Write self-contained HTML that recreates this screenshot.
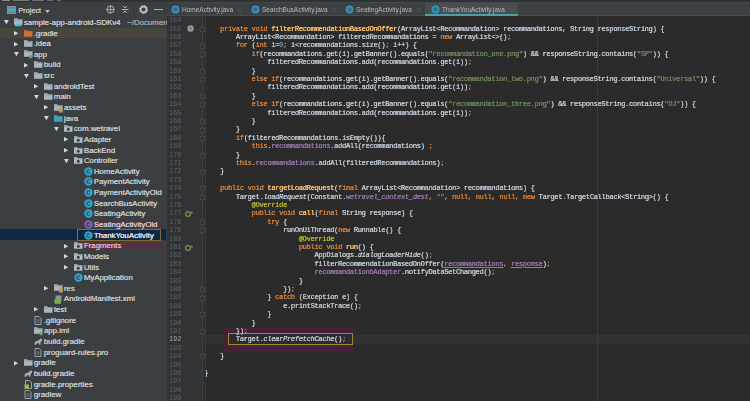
<!DOCTYPE html>
<html><head><meta charset="utf-8"><style>
*{margin:0;padding:0;box-sizing:border-box}
html,body{width:750px;height:401px;overflow:hidden;background:#3c3f41;position:relative}
body{font-family:"Liberation Sans",sans-serif}
div{position:absolute}
.topstrip{left:0;top:0;width:750px;height:1.6px;background:#2f3336}
.proj{left:0;top:0;width:167px;height:401px;background:#3c3f41;overflow:hidden}
.tabs{left:166px;top:1.6px;width:584px;height:14.7px;background:#3d4043}
.gut{left:167px;top:16px;width:37px;height:385px;background:#313335}
.ed{left:204px;top:16px;width:546px;height:385px;background:#2b2b2b;overflow:hidden}
.ln{left:160px;width:21.3px;height:8.4px;line-height:8.4px;font:6.8px/8.4px "Liberation Mono",monospace;color:#606366;text-align:right}
.ln.cur{color:#a4a3a3}
.cl{left:204.3px;white-space:pre;height:8.4px;font:7.0px/8.4px "Liberation Mono",monospace;letter-spacing:-0.270px;color:#bfc9d3;text-shadow:0.3px 0 0 currentColor}
.k{color:#d8823a} .s{color:#6a8759} .m{color:#ffc66d} .n{color:#6897bb} .f{color:#9876aa} .a{color:#bbb529} .i{font-style:italic} .fi{color:#9876aa;font-style:italic} .fu{color:#9876aa;text-decoration:underline;text-decoration-thickness:0.6px;text-underline-offset:0.8px}
.tr{white-space:pre;height:10.637px;line-height:10.637px;font-size:7.85px;color:#cacaca;text-shadow:0.25px 0 0 #cacaca}
.path{color:#8c8c8c}
.tri,.ic{line-height:0}
.tab{top:2.9px;height:14px;line-height:14px;font-size:6.5px;color:#bbbbbb;white-space:pre}
.margin{left:597px;top:16px;width:1px;height:385px;background:#3b3b3b}
</style></head><body><div id="wrap" style="position:absolute;left:0;top:0;width:750px;height:401px;filter:blur(0.35px)">
<div class="proj">
<div style="left:0;top:27.82px;width:166px;height:10.637px;background:#47463c"></div>
<div style="left:0;top:229.2px;width:166px;height:11px;background:#0f2740"></div>

<div style="left:7px;top:6px;line-height:0"><svg width="9" height="8"><rect x="0.4" y="0.4" width="8.2" height="7.2" fill="#6e8196" stroke="#9a8fb0" stroke-width="0.8"/><rect x="1.2" y="2.6" width="6.6" height="2.8" fill="#3fb3bb"/></svg></div>
<div style="left:18.2px;top:2.6px;height:15px;line-height:15px;font-size:7.3px;color:#c4c4c4;text-shadow:0.25px 0 0 #c4c4c4">Project</div>
<div style="left:45.2px;top:8.6px;line-height:0"><svg width="5" height="4"><path d="M0 0h4.8l-2.4 3.2z" fill="#b8babc"/></svg></div>
<div style="left:106px;top:5.3px;line-height:0"><svg width="9" height="9"><circle cx="4.5" cy="4.5" r="3.6" fill="none" stroke="#b0b3b5" stroke-width="1"/><path d="M4.5 0.5v8M0.5 4.5h8" stroke="#b0b3b5" stroke-width="0.8"/></svg></div>
<div style="left:120.5px;top:5px;line-height:0"><svg width="8" height="9"><path d="M0.5 4.5h7" stroke="#b0b3b5" stroke-width="1"/><path d="M2 1l2 2 2-2M2 8l2-2 2 2" fill="none" stroke="#b0b3b5" stroke-width="1"/></svg></div>
<div style="left:133.5px;top:4px;width:0.8px;height:11px;background:#34373a"></div>
<div style="left:139px;top:5.3px;line-height:0"><svg width="9" height="9"><circle cx="4.5" cy="4.5" r="3" fill="none" stroke="#bcbec0" stroke-width="1.8"/><circle cx="4.5" cy="4.5" r="4" fill="none" stroke="#bcbec0" stroke-width="1" stroke-dasharray="1.5 1.6"/></svg></div>
<div style="left:153.5px;top:9px;width:9px;height:1.2px;background:#b0b3b5"></div>

<div style="left:80px;top:221.5px;width:81px;height:6.5px;background:#50303f"></div>
<div style="left:74px;top:242px;width:87px;height:6.5px;background:#523243"></div>
<div class="tri" style="left:4.1px;top:20.3px"><svg width="5" height="5"><path d="M0 0h4.8l-2.4 4.2z" fill="#d2d4d6"/></svg></div>
<div class="ic" style="left:13.5px;top:18.3px"><svg width="10" height="9"><path d="M0 0.3h3.2l0.9 1h4.4v5.4h-8.5z" fill="#aab5bf"/><path d="M0 1.9h8.5" stroke="#7d8892" stroke-width="0.5"/><rect x="1" y="6" width="6.5" height="2.2" fill="#3fc8d6"/></svg></div>
<div class="tr" style="left:23.7px;top:17.88px">sample-app-android-SDKv4<span class="path">&nbsp;&nbsp; ~/Documents/Projects</span></div>
<div class="tri" style="left:14.1px;top:30.8px"><svg width="5" height="5"><path d="M0 0v4.5l4.3-2.25z" fill="#d2d4d6"/></svg></div>
<div class="ic" style="left:23.5px;top:29.5px"><svg width="9" height="7"><path d="M0 0.3h3.2l0.9 1h4.4v5.4h-8.5z" fill="#d9692f"/><path d="M0 1.9h8.5" stroke="#7d8892" stroke-width="0.5"/></svg></div>
<div class="tr" style="left:33.7px;top:28.52px">.gradle</div>
<div class="tri" style="left:14.1px;top:41.5px"><svg width="5" height="5"><path d="M0 0v4.5l4.3-2.25z" fill="#d2d4d6"/></svg></div>
<div class="ic" style="left:23.5px;top:40.2px"><svg width="9" height="7"><path d="M0 0.3h3.2l0.9 1h4.4v5.4h-8.5z" fill="#aab5bf"/><path d="M0 1.9h8.5" stroke="#7d8892" stroke-width="0.5"/></svg></div>
<div class="tr" style="left:33.7px;top:39.16px">.idea</div>
<div class="tri" style="left:14.1px;top:52.2px"><svg width="5" height="5"><path d="M0 0h4.8l-2.4 4.2z" fill="#d2d4d6"/></svg></div>
<div class="ic" style="left:23.5px;top:50.4px"><svg width="9" height="9"><path d="M0 0.3h3.2l0.9 1h4.4v5.4h-8.5z" fill="#aab5bf"/><path d="M0 1.9h8.5" stroke="#7d8892" stroke-width="0.5"/><circle cx="6.8" cy="6.8" r="1.7" fill="#58b158"/></svg></div>
<div class="tr" style="left:33.7px;top:49.79px">app</div>
<div class="tri" style="left:24.1px;top:62.7px"><svg width="5" height="5"><path d="M0 0v4.5l4.3-2.25z" fill="#d2d4d6"/></svg></div>
<div class="ic" style="left:33.5px;top:61.4px"><svg width="9" height="7"><path d="M0 0.3h3.2l0.9 1h4.4v5.4h-8.5z" fill="#aab5bf"/><path d="M0 1.9h8.5" stroke="#7d8892" stroke-width="0.5"/></svg></div>
<div class="tr" style="left:43.7px;top:60.43px">build</div>
<div class="tri" style="left:24.1px;top:73.5px"><svg width="5" height="5"><path d="M0 0h4.8l-2.4 4.2z" fill="#d2d4d6"/></svg></div>
<div class="ic" style="left:33.5px;top:72.1px"><svg width="9" height="7"><path d="M0 0.3h3.2l0.9 1h4.4v5.4h-8.5z" fill="#aab5bf"/><path d="M0 1.9h8.5" stroke="#7d8892" stroke-width="0.5"/></svg></div>
<div class="tr" style="left:43.7px;top:71.07px">src</div>
<div class="tri" style="left:34.1px;top:84.0px"><svg width="5" height="5"><path d="M0 0v4.5l4.3-2.25z" fill="#d2d4d6"/></svg></div>
<div class="ic" style="left:43.5px;top:82.7px"><svg width="9" height="7"><path d="M0 0.3h3.2l0.9 1h4.4v5.4h-8.5z" fill="#aab5bf"/><path d="M0 1.9h8.5" stroke="#7d8892" stroke-width="0.5"/></svg></div>
<div class="tr" style="left:53.7px;top:81.70px">androidTest</div>
<div class="tri" style="left:34.1px;top:94.8px"><svg width="5" height="5"><path d="M0 0h4.8l-2.4 4.2z" fill="#d2d4d6"/></svg></div>
<div class="ic" style="left:43.5px;top:93.4px"><svg width="9" height="7"><path d="M0 0.3h3.2l0.9 1h4.4v5.4h-8.5z" fill="#aab5bf"/><path d="M0 1.9h8.5" stroke="#7d8892" stroke-width="0.5"/></svg></div>
<div class="tr" style="left:53.7px;top:92.34px">main</div>
<div class="tri" style="left:44.1px;top:105.3px"><svg width="5" height="5"><path d="M0 0v4.5l4.3-2.25z" fill="#d2d4d6"/></svg></div>
<div class="ic" style="left:53.5px;top:103.6px"><svg width="9" height="9"><path d="M0 0.3h3.2l0.9 1h4.4v5.4h-8.5z" fill="#aab5bf"/><path d="M0 1.9h8.5" stroke="#7d8892" stroke-width="0.5"/><rect x="5" y="4.2" width="3.8" height="4.3" fill="#c09a5a"/></svg></div>
<div class="tr" style="left:63.7px;top:102.98px">assets</div>
<div class="tri" style="left:44.1px;top:116.0px"><svg width="5" height="5"><path d="M0 0h4.8l-2.4 4.2z" fill="#d2d4d6"/></svg></div>
<div class="ic" style="left:53.5px;top:114.6px"><svg width="9" height="7"><path d="M0 0.3h3.2l0.9 1h4.4v5.4h-8.5z" fill="#40a0c8"/><path d="M0 1.9h8.5" stroke="#7d8892" stroke-width="0.5"/></svg></div>
<div class="tr" style="left:63.7px;top:113.61px">java</div>
<div class="tri" style="left:54.1px;top:126.7px"><svg width="5" height="5"><path d="M0 0h4.8l-2.4 4.2z" fill="#d2d4d6"/></svg></div>
<div class="ic" style="left:63.5px;top:125.3px"><svg width="9" height="7"><path d="M0 0.3h3.2l0.9 1h4.4v5.4h-8.5z" fill="#b4bec6"/><path d="M0 1.9h8.5" stroke="#7d8892" stroke-width="0.5"/><circle cx="4.3" cy="4.2" r="1.5" fill="#3c3f41"/></svg></div>
<div class="tr" style="left:73.7px;top:124.25px">com.wetravel</div>
<div class="tri" style="left:64.1px;top:137.2px"><svg width="5" height="5"><path d="M0 0v4.5l4.3-2.25z" fill="#d2d4d6"/></svg></div>
<div class="ic" style="left:73.5px;top:135.9px"><svg width="9" height="7"><path d="M0 0.3h3.2l0.9 1h4.4v5.4h-8.5z" fill="#b4bec6"/><path d="M0 1.9h8.5" stroke="#7d8892" stroke-width="0.5"/><circle cx="4.3" cy="4.2" r="1.5" fill="#3c3f41"/></svg></div>
<div class="tr" style="left:83.7px;top:134.89px">Adapter</div>
<div class="tri" style="left:64.1px;top:147.8px"><svg width="5" height="5"><path d="M0 0v4.5l4.3-2.25z" fill="#d2d4d6"/></svg></div>
<div class="ic" style="left:73.5px;top:146.5px"><svg width="9" height="7"><path d="M0 0.3h3.2l0.9 1h4.4v5.4h-8.5z" fill="#b4bec6"/><path d="M0 1.9h8.5" stroke="#7d8892" stroke-width="0.5"/><circle cx="4.3" cy="4.2" r="1.5" fill="#3c3f41"/></svg></div>
<div class="tr" style="left:83.7px;top:145.53px">BackEnd</div>
<div class="tri" style="left:64.1px;top:158.6px"><svg width="5" height="5"><path d="M0 0h4.8l-2.4 4.2z" fill="#d2d4d6"/></svg></div>
<div class="ic" style="left:73.5px;top:157.2px"><svg width="9" height="7"><path d="M0 0.3h3.2l0.9 1h4.4v5.4h-8.5z" fill="#b4bec6"/><path d="M0 1.9h8.5" stroke="#7d8892" stroke-width="0.5"/><circle cx="4.3" cy="4.2" r="1.5" fill="#3c3f41"/></svg></div>
<div class="tr" style="left:83.7px;top:156.16px">Controller</div>
<div class="ic" style="left:83.5px;top:166.7px"><svg width="9" height="9" viewBox="0 0 9 9"><circle cx="4.5" cy="4.5" r="4.2" fill="#3aa2c4"/><path d="M5.9 3.3a1.8 1.8 0 1 0 0 2.4" fill="none" stroke="#1d4e6e" stroke-width="1.1"/></svg></div>
<div class="tr" style="left:93.7px;top:166.80px">HomeActivity</div>
<div class="ic" style="left:83.5px;top:177.4px"><svg width="9" height="9" viewBox="0 0 9 9"><circle cx="4.5" cy="4.5" r="4.2" fill="#3aa2c4"/><path d="M5.9 3.3a1.8 1.8 0 1 0 0 2.4" fill="none" stroke="#1d4e6e" stroke-width="1.1"/></svg></div>
<div class="tr" style="left:93.7px;top:177.44px">PaymentActivity</div>
<div class="ic" style="left:83.5px;top:188.0px"><svg width="9" height="9" viewBox="0 0 9 9"><circle cx="4.5" cy="4.5" r="4.2" fill="#3aa2c4"/><path d="M5.9 3.3a1.8 1.8 0 1 0 0 2.4" fill="none" stroke="#1d4e6e" stroke-width="1.1"/></svg></div>
<div class="tr" style="left:93.7px;top:188.07px">PaymentActivityOld</div>
<div class="ic" style="left:83.5px;top:198.6px"><svg width="9" height="9" viewBox="0 0 9 9"><circle cx="4.5" cy="4.5" r="4.2" fill="#3aa2c4"/><path d="M5.9 3.3a1.8 1.8 0 1 0 0 2.4" fill="none" stroke="#1d4e6e" stroke-width="1.1"/></svg></div>
<div class="tr" style="left:93.7px;top:198.71px">SearchBusActivity</div>
<div class="ic" style="left:83.5px;top:209.3px"><svg width="9" height="9" viewBox="0 0 9 9"><circle cx="4.5" cy="4.5" r="4.2" fill="#3aa2c4"/><path d="M5.9 3.3a1.8 1.8 0 1 0 0 2.4" fill="none" stroke="#1d4e6e" stroke-width="1.1"/></svg></div>
<div class="tr" style="left:93.7px;top:209.35px">SeatingActivity</div>
<div class="ic" style="left:83.5px;top:219.9px"><svg width="9" height="9" viewBox="0 0 9 9"><circle cx="4.5" cy="4.5" r="4.2" fill="#7468b0"/><path d="M5.9 3.3a1.8 1.8 0 1 0 0 2.4" fill="none" stroke="#3a2e66" stroke-width="1.1"/></svg></div>
<div class="tr" style="left:93.7px;top:219.98px;color:#d8c8d0;text-shadow:0.25px 0 0 #d8c8d0">SeatingActivityOld</div>
<div class="ic" style="left:83.5px;top:230.5px"><svg width="9" height="9" viewBox="0 0 9 9"><circle cx="4.5" cy="4.5" r="4.2" fill="#3aa2c4"/><path d="M5.9 3.3a1.8 1.8 0 1 0 0 2.4" fill="none" stroke="#1d4e6e" stroke-width="1.1"/></svg></div>
<div class="tr" style="left:93.7px;top:230.62px;color:#e6e6e6;text-shadow:0.25px 0 0 #e6e6e6">ThankYouActivity</div>
<div class="tri" style="left:64.1px;top:243.6px"><svg width="5" height="5"><path d="M0 0v4.5l4.3-2.25z" fill="#d2d4d6"/></svg></div>
<div class="ic" style="left:73.5px;top:242.3px"><svg width="9" height="7"><path d="M0 0.3h3.2l0.9 1h4.4v5.4h-8.5z" fill="#b4bec6"/><path d="M0 1.9h8.5" stroke="#7d8892" stroke-width="0.5"/><circle cx="4.3" cy="4.2" r="1.5" fill="#3c3f41"/></svg></div>
<div class="tr" style="left:83.7px;top:241.26px;color:#e0b0c0;text-shadow:0.25px 0 0 #e0b0c0">Fragments</div>
<div class="tri" style="left:64.1px;top:254.2px"><svg width="5" height="5"><path d="M0 0v4.5l4.3-2.25z" fill="#d2d4d6"/></svg></div>
<div class="ic" style="left:73.5px;top:252.9px"><svg width="9" height="7"><path d="M0 0.3h3.2l0.9 1h4.4v5.4h-8.5z" fill="#b4bec6"/><path d="M0 1.9h8.5" stroke="#7d8892" stroke-width="0.5"/><circle cx="4.3" cy="4.2" r="1.5" fill="#3c3f41"/></svg></div>
<div class="tr" style="left:83.7px;top:251.90px">Models</div>
<div class="tri" style="left:64.1px;top:264.9px"><svg width="5" height="5"><path d="M0 0v4.5l4.3-2.25z" fill="#d2d4d6"/></svg></div>
<div class="ic" style="left:73.5px;top:263.6px"><svg width="9" height="7"><path d="M0 0.3h3.2l0.9 1h4.4v5.4h-8.5z" fill="#b4bec6"/><path d="M0 1.9h8.5" stroke="#7d8892" stroke-width="0.5"/><circle cx="4.3" cy="4.2" r="1.5" fill="#3c3f41"/></svg></div>
<div class="tr" style="left:83.7px;top:262.53px">Utils</div>
<div class="ic" style="left:73.5px;top:273.1px"><svg width="9" height="9" viewBox="0 0 9 9"><circle cx="4.5" cy="4.5" r="4.2" fill="#3aa2c4"/><path d="M5.9 3.3a1.8 1.8 0 1 0 0 2.4" fill="none" stroke="#1d4e6e" stroke-width="1.1"/></svg></div>
<div class="tr" style="left:83.7px;top:273.17px">MyApplication</div>
<div class="tri" style="left:44.1px;top:286.1px"><svg width="5" height="5"><path d="M0 0v4.5l4.3-2.25z" fill="#d2d4d6"/></svg></div>
<div class="ic" style="left:53.5px;top:284.4px"><svg width="9" height="9"><path d="M0 0.3h3.2l0.9 1h4.4v5.4h-8.5z" fill="#aab5bf"/><path d="M0 1.9h8.5" stroke="#7d8892" stroke-width="0.5"/><rect x="5" y="4.2" width="3.8" height="4.3" fill="#c09a5a"/></svg></div>
<div class="tr" style="left:63.7px;top:283.81px">res</div>
<div class="ic" style="left:53.5px;top:294.5px"><svg width="9" height="9" viewBox="0 0 9 9"><rect x="1.5" y="0.5" width="6" height="5" fill="#8b979e"/><rect x="0.5" y="4" width="6.5" height="4.8" fill="#78b046"/></svg></div>
<div class="tr" style="left:63.7px;top:294.44px">AndroidManifest.xml</div>
<div class="tri" style="left:34.1px;top:307.4px"><svg width="5" height="5"><path d="M0 0v4.5l4.3-2.25z" fill="#d2d4d6"/></svg></div>
<div class="ic" style="left:43.5px;top:306.1px"><svg width="9" height="7"><path d="M0 0.3h3.2l0.9 1h4.4v5.4h-8.5z" fill="#aab5bf"/><path d="M0 1.9h8.5" stroke="#7d8892" stroke-width="0.5"/></svg></div>
<div class="tr" style="left:53.7px;top:305.08px">test</div>
<div class="ic" style="left:33.5px;top:315.7px"><svg width="8" height="9" viewBox="0 0 8 9"><path d="M1 0.5h4l2 2v6h-6z" fill="none" stroke="#9aa5ae" stroke-width="1"/><path d="M2.5 4h3M2.5 6h3" stroke="#9aa5ae" stroke-width="0.7"/></svg></div>
<div class="tr" style="left:43.7px;top:315.72px">.gitignore</div>
<div class="ic" style="left:33.5px;top:327.0px"><svg width="9" height="9"><path d="M0 0.3h3.2l0.9 1h4.4v5.4h-8.5z" fill="#aab5bf"/><path d="M0 1.9h8.5" stroke="#7d8892" stroke-width="0.5"/><circle cx="6.8" cy="6.8" r="1.7" fill="#58b158"/></svg></div>
<div class="tr" style="left:43.7px;top:326.35px">app.iml</div>
<div class="ic" style="left:33.5px;top:336.8px"><svg width="9" height="9" viewBox="0 0 9 9"><path d="M0.5 7.8L0.8 5.2Q2 3.6 4.8 3.3L7 1.3Q8.6 2.2 8 3.8L6.6 5L6.6 7.8L5.4 7.8L5 6.2L2.8 6.2L2.2 7.8z" fill="#a5afb8"/></svg></div>
<div class="tr" style="left:43.7px;top:336.99px">build.gradle</div>
<div class="ic" style="left:33.5px;top:347.6px"><svg width="8" height="9" viewBox="0 0 8 9"><path d="M1 0.5h4l2 2v6h-6z" fill="none" stroke="#9aa5ae" stroke-width="1"/><path d="M2.5 4h3M2.5 6h3" stroke="#9aa5ae" stroke-width="0.7"/></svg></div>
<div class="tr" style="left:43.7px;top:347.63px">proguard-rules.pro</div>
<div class="tri" style="left:14.1px;top:360.6px"><svg width="5" height="5"><path d="M0 0v4.5l4.3-2.25z" fill="#d2d4d6"/></svg></div>
<div class="ic" style="left:23.5px;top:359.3px"><svg width="9" height="7"><path d="M0 0.3h3.2l0.9 1h4.4v5.4h-8.5z" fill="#aab5bf"/><path d="M0 1.9h8.5" stroke="#7d8892" stroke-width="0.5"/></svg></div>
<div class="tr" style="left:33.7px;top:358.27px">gradle</div>
<div class="ic" style="left:23.5px;top:368.7px"><svg width="9" height="9" viewBox="0 0 9 9"><path d="M0.5 7.8L0.8 5.2Q2 3.6 4.8 3.3L7 1.3Q8.6 2.2 8 3.8L6.6 5L6.6 7.8L5.4 7.8L5 6.2L2.8 6.2L2.2 7.8z" fill="#a5afb8"/></svg></div>
<div class="tr" style="left:33.7px;top:368.90px">build.gradle</div>
<div class="ic" style="left:23.5px;top:379.6px"><svg width="9" height="9" viewBox="0 0 9 9"><path d="M1.5 0.5h4l2 2v6h-6z" fill="none" stroke="#9aa5ae" stroke-width="1"/><rect x="0.5" y="4.5" width="4.5" height="4.5" fill="#a6b24a"/></svg></div>
<div class="tr" style="left:33.7px;top:379.54px">gradle.properties</div>
<div class="ic" style="left:23.5px;top:390.2px"><svg width="8" height="9" viewBox="0 0 8 9"><path d="M1 0.5h4l2 2v6h-6z" fill="none" stroke="#9aa5ae" stroke-width="1"/><path d="M2.5 4h3M2.5 6h3" stroke="#9aa5ae" stroke-width="0.7"/></svg></div>
<div class="tr" style="left:33.7px;top:390.18px">gradlew</div>
<div style="left:77px;top:229px;width:84px;height:12.4px;border:1.2px solid #7d7036"></div>
</div>
<div class="topstrip"></div>
<div style="left:2px;top:0;width:8px;height:1px;background:#8a8c8e"></div>
<div style="left:13px;top:0;width:16px;height:1px;background:#77797b"></div>
<div style="left:32px;top:0;width:12px;height:1px;background:#6f7173"></div>
<div style="left:47px;top:0;width:6px;height:1px;background:#6a6c6e"></div>
<div style="left:57px;top:0;width:4px;height:1px;background:#6a6c6e"></div>
<div class="tabs"></div>
<div style="left:166px;top:1.8px;width:584px;height:1.2px;background:#45494c"></div>
<div style="left:166px;top:14.8px;width:584px;height:1.3px;background:#47494c"></div>
<div style="left:424.7px;top:2.8px;width:93px;height:13px;background:#4a4d50"></div>
<div style="left:424.7px;top:14.3px;width:93px;height:1.7px;background:#4a9fab"></div>
<div style="left:170.8px;top:4.6px;line-height:0"><svg width="9" height="9"><circle cx="4.5" cy="4.5" r="3.9" fill="#3597b8"/><circle cx="4.5" cy="4.5" r="2.3" fill="#2f6f9c"/></svg></div>
<div class="tab" style="left:182px">HomeActivity.java</div>
<div style="left:237.3px;top:7.4px;line-height:0"><svg width="4" height="4"><path d="M0 0l4 4M4 0l-4 4" stroke="#54575a" stroke-width="0.8"/></svg></div>
<div style="left:250.8px;top:4.6px;line-height:0"><svg width="9" height="9"><circle cx="4.5" cy="4.5" r="3.9" fill="#3597b8"/><circle cx="4.5" cy="4.5" r="2.3" fill="#2f6f9c"/></svg></div>
<div class="tab" style="left:262px">SearchBusActivity.java</div>
<div style="left:332.0px;top:7.4px;line-height:0"><svg width="4" height="4"><path d="M0 0l4 4M4 0l-4 4" stroke="#54575a" stroke-width="0.8"/></svg></div>
<div style="left:344.8px;top:4.6px;line-height:0"><svg width="9" height="9"><circle cx="4.5" cy="4.5" r="3.9" fill="#3597b8"/><circle cx="4.5" cy="4.5" r="2.3" fill="#2f6f9c"/></svg></div>
<div class="tab" style="left:356px">SeatingActivity.java</div>
<div style="left:417.3px;top:7.4px;line-height:0"><svg width="4" height="4"><path d="M0 0l4 4M4 0l-4 4" stroke="#54575a" stroke-width="0.8"/></svg></div>
<div style="left:430.8px;top:4.6px;line-height:0"><svg width="9" height="9"><circle cx="4.5" cy="4.5" r="3.9" fill="#3597b8"/><circle cx="4.5" cy="4.5" r="2.3" fill="#2f6f9c"/></svg></div>
<div class="tab" style="left:442px">ThankYouActivity.java</div>
<div style="left:508.7px;top:7.4px;line-height:0"><svg width="4" height="4"><path d="M0 0l4 4M4 0l-4 4" stroke="#54575a" stroke-width="0.8"/></svg></div>
<div class="gut"></div>
<div class="ed"></div>
<div style="left:204px;top:335.30px;width:546px;height:8.4px;background:#323232"></div>
<div class="margin"></div>
<div style="left:224px;top:328px;width:129px;height:23.6px;background:#45213a"></div>
<div style="left:227.6px;top:333.3px;width:125.4px;height:12.2px;border:1.3px solid #a08a30;background:#2d2b30"></div>
<div class="ln" style="top:16.10px">154</div>
<div class="ln" style="top:24.50px">155</div>
<div class="cl" style="top:24.50px">    <span class="k">private void </span><span class="m">filterRecommendationBasedOnOffer</span>(ArrayList&lt;Recommandation&gt; recommandations, String responseString) {</div>
<div class="ln" style="top:32.90px">156</div>
<div class="cl" style="top:32.90px">        ArrayList&lt;Recommandation&gt; filteredRecommandations = <span class="k">new </span>ArrayList&lt;&gt;()<span class="k">;</span></div>
<div class="ln" style="top:41.30px">157</div>
<div class="cl" style="top:41.30px">        <span class="k">for </span>(<span class="k">int </span>i=<span class="n">0</span><span class="k">;</span> i&lt;recommandations.size()<span class="k">;</span> i++) {</div>
<div class="ln" style="top:49.70px">158</div>
<div class="cl" style="top:49.70px">            <span class="k">if</span>(recommandations.get(i).getBanner().equals(<span class="s">&quot;recommandation_one.png&quot;</span>) &amp;&amp; responseString.contains(<span class="s">&quot;SP&quot;</span>)) {</div>
<div class="ln" style="top:58.10px">159</div>
<div class="cl" style="top:58.10px">                filteredRecommandations.add(recommandations.get(i))<span class="k">;</span></div>
<div class="ln" style="top:66.50px">160</div>
<div class="cl" style="top:66.50px">            }</div>
<div class="ln" style="top:74.90px">161</div>
<div class="cl" style="top:74.90px">            <span class="k">else if</span>(recommandations.get(i).getBanner().equals(<span class="s">&quot;recommandation_two.png&quot;</span>) &amp;&amp; responseString.contains(<span class="s">&quot;Universal&quot;</span>)) {</div>
<div class="ln" style="top:83.30px">162</div>
<div class="cl" style="top:83.30px">                filteredRecommandations.add(recommandations.get(i))<span class="k">;</span></div>
<div class="ln" style="top:91.70px">163</div>
<div class="cl" style="top:91.70px">            }</div>
<div class="ln" style="top:100.10px">164</div>
<div class="cl" style="top:100.10px">            <span class="k">else if</span>(recommandations.get(i).getBanner().equals(<span class="s">&quot;recommandation_three.png&quot;</span>) &amp;&amp; responseString.contains(<span class="s">&quot;DJ&quot;</span>)) {</div>
<div class="ln" style="top:108.50px">165</div>
<div class="cl" style="top:108.50px">                filteredRecommandations.add(recommandations.get(i))<span class="k">;</span></div>
<div class="ln" style="top:116.90px">166</div>
<div class="cl" style="top:116.90px">            }</div>
<div class="ln" style="top:125.30px">167</div>
<div class="cl" style="top:125.30px">        }</div>
<div class="ln" style="top:133.70px">168</div>
<div class="cl" style="top:133.70px">        <span class="k">if</span>(filteredRecommandations.isEmpty()){</div>
<div class="ln" style="top:142.10px">169</div>
<div class="cl" style="top:142.10px">            <span class="k">this</span>.<span class="f">recommandations</span>.addAll(recommandations) <span class="k">;</span></div>
<div class="ln" style="top:150.50px">170</div>
<div class="cl" style="top:150.50px">        }</div>
<div class="ln" style="top:158.90px">171</div>
<div class="cl" style="top:158.90px">        <span class="k">this</span>.<span class="f">recommandations</span>.addAll(filteredRecommandations)<span class="k">;</span></div>
<div class="ln" style="top:167.30px">172</div>
<div class="cl" style="top:167.30px">    }</div>
<div class="ln" style="top:175.70px">173</div>
<div class="ln" style="top:184.10px">174</div>
<div class="cl" style="top:184.10px">    <span class="k">public void </span><span class="m">targetLoadRequest</span>(<span class="k">final </span>ArrayList&lt;Recommandation&gt; recommandations) {</div>
<div class="ln" style="top:192.50px">175</div>
<div class="cl" style="top:192.50px">        Target.<span class="i">loadRequest</span>(Constant.<span class="fi">wetravel_context_dest</span><span class="k">, </span><span class="s">&quot;&quot;</span><span class="k">, </span><span class="k">null</span><span class="k">, </span><span class="k">null</span><span class="k">, </span><span class="k">null</span><span class="k">, </span><span class="k">new </span>Target.TargetCallback&lt;String&gt;() {</div>
<div class="ln" style="top:200.90px">176</div>
<div class="cl" style="top:200.90px">            <span class="a">@Override</span></div>
<div class="ln" style="top:209.30px">177</div>
<div class="cl" style="top:209.30px">            <span class="k">public void </span><span class="m">call</span>(<span class="k">final </span>String response) {</div>
<div class="ln" style="top:217.70px">178</div>
<div class="cl" style="top:217.70px">                <span class="k">try </span>{</div>
<div class="ln" style="top:226.10px">179</div>
<div class="cl" style="top:226.10px">                    runOnUiThread(<span class="k">new </span>Runnable() {</div>
<div class="ln" style="top:234.50px">180</div>
<div class="cl" style="top:234.50px">                        <span class="a">@Override</span></div>
<div class="ln" style="top:242.90px">181</div>
<div class="cl" style="top:242.90px">                        <span class="k">public void </span><span class="m">run</span>() {</div>
<div class="ln" style="top:251.30px">182</div>
<div class="cl" style="top:251.30px">                            AppDialogs.<span class="i">dialogLoaderHide</span>()<span class="k">;</span></div>
<div class="ln" style="top:259.70px">183</div>
<div class="cl" style="top:259.70px">                            filterRecommendationBasedOnOffer(<span class="fu">recommandations</span><span class="k">, </span><span class="fu">response</span>)<span class="k">;</span></div>
<div class="ln" style="top:268.10px">184</div>
<div class="cl" style="top:268.10px">                            <span class="f">recommandationbAdapter</span>.notifyDataSetChanged()<span class="k">;</span></div>
<div class="ln" style="top:276.50px">185</div>
<div class="cl" style="top:276.50px">                        }</div>
<div class="ln" style="top:284.90px">186</div>
<div class="cl" style="top:284.90px">                    })<span class="k">;</span></div>
<div class="ln" style="top:293.30px">187</div>
<div class="cl" style="top:293.30px">                } <span class="k">catch </span>(Exception e) {</div>
<div class="ln" style="top:301.70px">188</div>
<div class="cl" style="top:301.70px">                    e.printStackTrace()<span class="k">;</span></div>
<div class="ln" style="top:310.10px">189</div>
<div class="cl" style="top:310.10px">                }</div>
<div class="ln" style="top:318.50px">190</div>
<div class="cl" style="top:318.50px">            }</div>
<div class="ln" style="top:326.90px">191</div>
<div class="cl" style="top:326.90px">        })<span class="k">;</span></div>
<div class="ln cur" style="top:335.30px">192</div>
<div class="cl" style="top:335.30px">        Target.<span class="i">clearPrefetchCache</span>()<span class="k">;</span></div>
<div class="ln" style="top:343.70px">193</div>
<div class="ln" style="top:352.10px">194</div>
<div class="cl" style="top:352.10px">    }</div>
<div class="ln" style="top:360.50px">195</div>
<div class="ln" style="top:368.90px">196</div>
<div class="cl" style="top:368.90px">}</div>
<div class="ln" style="top:377.30px">197</div>
<div class="ln" style="top:385.70px">198</div>
<div class="ln" style="top:394.10px">199</div>
<div class="ln" style="top:402.50px">200</div>
<div style="left:202.3px;top:16px;width:0.8px;height:385px;background:#3b3e40"></div>
<div style="left:204.6px;top:16px;width:0.8px;height:385px;background:#353739"></div>
<div style="left:199px;top:25.70px;line-height:0"><svg width="7" height="7"><circle cx="3.5" cy="3.5" r="2.6" fill="#313335" stroke="#4d5053" stroke-width="0.9"/></svg></div>
<div style="left:199px;top:42.50px;line-height:0"><svg width="7" height="7"><circle cx="3.5" cy="3.5" r="2.6" fill="#313335" stroke="#4d5053" stroke-width="0.9"/></svg></div>
<div style="left:199px;top:50.90px;line-height:0"><svg width="7" height="7"><circle cx="3.5" cy="3.5" r="2.6" fill="#313335" stroke="#4d5053" stroke-width="0.9"/></svg></div>
<div style="left:199px;top:67.70px;line-height:0"><svg width="7" height="7"><circle cx="3.5" cy="3.5" r="2.6" fill="#313335" stroke="#4d5053" stroke-width="0.9"/></svg></div>
<div style="left:199px;top:76.10px;line-height:0"><svg width="7" height="7"><circle cx="3.5" cy="3.5" r="2.6" fill="#313335" stroke="#4d5053" stroke-width="0.9"/></svg></div>
<div style="left:199px;top:92.90px;line-height:0"><svg width="7" height="7"><circle cx="3.5" cy="3.5" r="2.6" fill="#313335" stroke="#4d5053" stroke-width="0.9"/></svg></div>
<div style="left:199px;top:101.30px;line-height:0"><svg width="7" height="7"><circle cx="3.5" cy="3.5" r="2.6" fill="#313335" stroke="#4d5053" stroke-width="0.9"/></svg></div>
<div style="left:199px;top:118.10px;line-height:0"><svg width="7" height="7"><circle cx="3.5" cy="3.5" r="2.6" fill="#313335" stroke="#4d5053" stroke-width="0.9"/></svg></div>
<div style="left:199px;top:126.50px;line-height:0"><svg width="7" height="7"><circle cx="3.5" cy="3.5" r="2.6" fill="#313335" stroke="#4d5053" stroke-width="0.9"/></svg></div>
<div style="left:199px;top:134.90px;line-height:0"><svg width="7" height="7"><circle cx="3.5" cy="3.5" r="2.6" fill="#313335" stroke="#4d5053" stroke-width="0.9"/></svg></div>
<div style="left:199px;top:151.70px;line-height:0"><svg width="7" height="7"><circle cx="3.5" cy="3.5" r="2.6" fill="#313335" stroke="#4d5053" stroke-width="0.9"/></svg></div>
<div style="left:199px;top:168.50px;line-height:0"><svg width="7" height="7"><circle cx="3.5" cy="3.5" r="2.6" fill="#313335" stroke="#4d5053" stroke-width="0.9"/></svg></div>
<div style="left:199px;top:185.30px;line-height:0"><svg width="7" height="7"><circle cx="3.5" cy="3.5" r="2.6" fill="#313335" stroke="#4d5053" stroke-width="0.9"/></svg></div>
<div style="left:199px;top:193.70px;line-height:0"><svg width="7" height="7"><circle cx="3.5" cy="3.5" r="2.6" fill="#313335" stroke="#4d5053" stroke-width="0.9"/></svg></div>
<div style="left:199px;top:218.90px;line-height:0"><svg width="7" height="7"><circle cx="3.5" cy="3.5" r="2.6" fill="#313335" stroke="#4d5053" stroke-width="0.9"/></svg></div>
<div style="left:199px;top:227.30px;line-height:0"><svg width="7" height="7"><circle cx="3.5" cy="3.5" r="2.6" fill="#313335" stroke="#4d5053" stroke-width="0.9"/></svg></div>
<div style="left:199px;top:286.10px;line-height:0"><svg width="7" height="7"><circle cx="3.5" cy="3.5" r="2.6" fill="#313335" stroke="#4d5053" stroke-width="0.9"/></svg></div>
<div style="left:199px;top:294.50px;line-height:0"><svg width="7" height="7"><circle cx="3.5" cy="3.5" r="2.6" fill="#313335" stroke="#4d5053" stroke-width="0.9"/></svg></div>
<div style="left:199px;top:311.30px;line-height:0"><svg width="7" height="7"><circle cx="3.5" cy="3.5" r="2.6" fill="#313335" stroke="#4d5053" stroke-width="0.9"/></svg></div>
<div style="left:199px;top:328.10px;line-height:0"><svg width="7" height="7"><circle cx="3.5" cy="3.5" r="2.6" fill="#313335" stroke="#4d5053" stroke-width="0.9"/></svg></div>
<div style="left:199px;top:353.30px;line-height:0"><svg width="7" height="7"><circle cx="3.5" cy="3.5" r="2.6" fill="#313335" stroke="#4d5053" stroke-width="0.9"/></svg></div>
<div style="left:186.5px;top:25.20px;line-height:0"><svg width="7" height="7"><circle cx="3.5" cy="3.5" r="3.2" fill="#9a9c9e"/><circle cx="3.5" cy="3.5" r="1.2" fill="#6a6c6e"/></svg></div>
<div style="left:184.5px;top:210.00px;line-height:0"><svg width="8" height="7"><circle cx="3" cy="4" r="2.4" fill="none" stroke="#7f9150" stroke-width="1.2"/><path d="M5 3.5l2-2.5l1 2.5z" fill="#7f9150"/></svg></div>
<div style="left:184.5px;top:243.60px;line-height:0"><svg width="8" height="7"><circle cx="3" cy="4" r="2.4" fill="none" stroke="#7f9150" stroke-width="1.2"/><path d="M5 3.5l2-2.5l1 2.5z" fill="#7f9150"/></svg></div>
</div></body></html>
